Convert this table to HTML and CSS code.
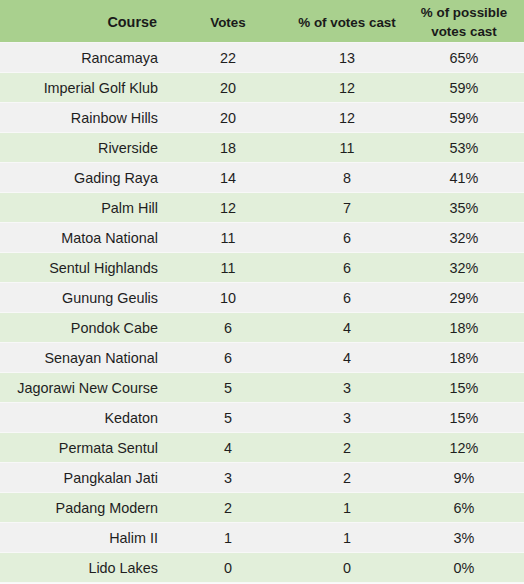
FILE: index.html
```html
<!DOCTYPE html>
<html>
<head>
<meta charset="utf-8">
<link rel="stylesheet" href="styles.css">
</head>
<body>
<table class="votes">
  <colgroup>
    <col class="c1"><col class="c2"><col class="c3"><col class="c4">
  </colgroup>
  <thead>
    <tr>
      <th class="name">Course</th>
      <th>Votes</th>
      <th>% of votes cast</th>
      <th>% of possible<br>votes cast</th>
    </tr>
  </thead>
  <tbody>
    <tr><td class="name">Rancamaya</td><td>22</td><td>13</td><td>65%</td></tr>
    <tr><td class="name">Imperial Golf Klub</td><td>20</td><td>12</td><td>59%</td></tr>
    <tr><td class="name">Rainbow Hills</td><td>20</td><td>12</td><td>59%</td></tr>
    <tr><td class="name">Riverside</td><td>18</td><td>11</td><td>53%</td></tr>
    <tr><td class="name">Gading Raya</td><td>14</td><td>8</td><td>41%</td></tr>
    <tr><td class="name">Palm Hill</td><td>12</td><td>7</td><td>35%</td></tr>
    <tr><td class="name">Matoa National</td><td>11</td><td>6</td><td>32%</td></tr>
    <tr><td class="name">Sentul Highlands</td><td>11</td><td>6</td><td>32%</td></tr>
    <tr><td class="name">Gunung Geulis</td><td>10</td><td>6</td><td>29%</td></tr>
    <tr><td class="name">Pondok Cabe</td><td>6</td><td>4</td><td>18%</td></tr>
    <tr><td class="name">Senayan National</td><td>6</td><td>4</td><td>18%</td></tr>
    <tr><td class="name">Jagorawi New Course</td><td>5</td><td>3</td><td>15%</td></tr>
    <tr><td class="name">Kedaton</td><td>5</td><td>3</td><td>15%</td></tr>
    <tr><td class="name">Permata Sentul</td><td>4</td><td>2</td><td>12%</td></tr>
    <tr><td class="name">Pangkalan Jati</td><td>3</td><td>2</td><td>9%</td></tr>
    <tr><td class="name">Padang Modern</td><td>2</td><td>1</td><td>6%</td></tr>
    <tr><td class="name">Halim II</td><td>1</td><td>1</td><td>3%</td></tr>
    <tr><td class="name">Lido Lakes</td><td>0</td><td>0</td><td>0%</td></tr>
  </tbody>
</table>
</body>
</html>
```
FILE: styles.css
```css
html, body {
  margin: 0;
  padding: 0;
  background: #fafafa;
}
.votes {
  width: 524px;
  border-collapse: collapse;
  table-layout: fixed;
  font-family: "Liberation Sans", Arial, sans-serif;
  font-size: 14.4px;
  color: #1e1e1e;
}
.c1 { width: 166px; }
.c2 { width: 124px; }
.c3 { width: 114px; }
.c4 { width: 120px; }
.votes th {
  background: #a9d08e;
  height: 40px;
  padding: 2px 0 0;
  font-size: 13.4px;
  font-weight: bold;
  line-height: 19px;
  color: #1a1a1a;
  text-align: center;
  border-bottom: 1px solid #f6f6f6;
}
.votes td {
  height: 28px;
  padding: 1px 0 0;
  text-align: center;
  border-bottom: 1px solid #f8f8f8;
}
.votes .name {
  text-align: right;
  padding-right: 8px;
}
.votes th.name {
  font-size: 14.4px;
  padding-right: 9px;
}
.votes tbody tr:nth-child(odd) td { background: #f1f1f1; }
.votes tbody tr:nth-child(even) td { background: #e2efda; }
```
